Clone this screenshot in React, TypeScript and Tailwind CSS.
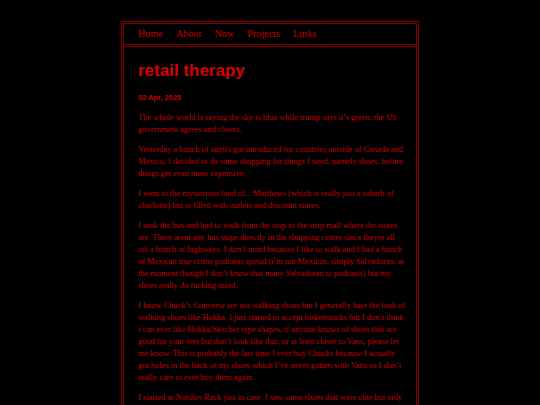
import React from "react";

const paragraphs = [
  "The whole world is saying the sky is blue while trump says it\u2019s green, the US government agrees and cheers.",
  "Yesterday a bunch of tarrifs got introduced for countries outside of Canada and Mexico, I decided to do some shopping for things I need, namely shoes, before things get even more expensive.",
  "I went to the mysterious land of... Matthews (which is really just a subarb of charlotte) but is filled with outlets and discount stores.",
  "I took the bus and had to walk from the stop to the strip mall where the stores are. There arent any bus stops directly in the shopping center since theyre all off a bunch of highways. I don\u2019t mind because I like to walk and I had a bunch of Mexican true crime podcasts queud (i\u2019m not Mexican, simply Salvadoran, at the moment though I don\u2019t know that many Salvadoran tc podcasts) but my shoes really do fucking mind.",
  "I know Chuck\u2019s Converse are not walking shoes but I generally hate the look of walking shoes like Hokka, I just started to accept birkenstocks but I don\u2019t think i can ever like Hokka/Skecher type shapes, if anyone knows of shoes that are good for your feet but don\u2019t look like that, or at least closer to Vans, please let me know. This is probably the last time I ever buy Chucks because I actually got holes in the back of my shoes which I\u2019ve never gotten with Vans so I don\u2019t really care to ever buy them again.",
  "I started at Nordies Rack just in case, I saw some shoes that were cute but only in the colors I didn\u2019t want and some others that were fine.",
];

export default function App() {
  return (
    <div className="min-h-screen bg-black pt-[21px]">
      <div className="mx-auto w-[298px] border-[3px] border-double border-[#800000]">
        <nav className="flex h-[23px] items-center gap-[13px] border-b-[3px] border-double border-[#800000] px-[14px] font-['Liberation_Serif','Times_New_Roman',serif] text-[10.2px] text-[#c00000]">
          <span>Home</span>
          <span>About</span>
          <span>Now</span>
          <span>Projects</span>
          <span>Links</span>
        </nav>
        <main className="pl-[14px] pr-[10px] pt-[14px] pb-[20px]">
          <h1 className="font-['Liberation_Sans',Arial,sans-serif] text-[17px] font-bold leading-[20px] text-[#d80000]">
            retail therapy
          </h1>
          <div className="mt-[12px] font-['Liberation_Sans',Arial,sans-serif] text-[7.4px] font-bold leading-[9px] text-[#c80000]">
            03 Apr, 2025
          </div>
          <div className="mt-[10px] flex flex-col gap-[8px] font-['Liberation_Serif','Times_New_Roman',serif] text-[8.4px] leading-[12px] text-[#c00000]">
            {paragraphs.map((p, i) => (
              <p key={i}>{p}</p>
            ))}
          </div>
        </main>
      </div>
    </div>
  );
}
